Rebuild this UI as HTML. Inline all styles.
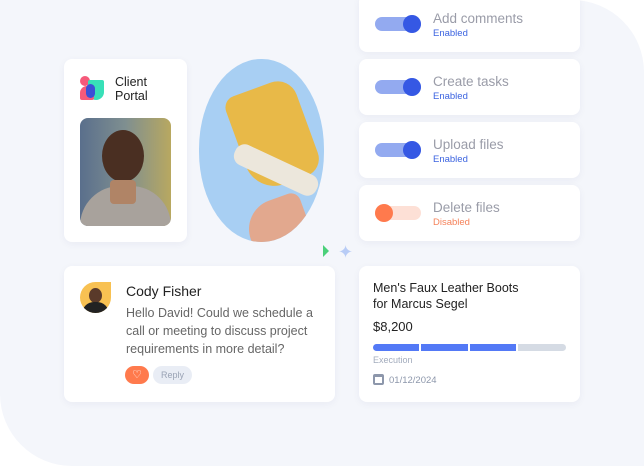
<!DOCTYPE html>
<html><head><style>
*{margin:0;padding:0;box-sizing:border-box}
body{width:644px;height:466px;background:#fff;font-family:"Liberation Sans",sans-serif;position:relative;overflow:hidden}
.bg{position:absolute;left:0;top:0;width:644px;height:466px;background:#f4f6fb;border-radius:0 72px 0 72px}
.card{position:absolute;background:#fff;border-radius:8px;box-shadow:0 2px 8px rgba(30,40,90,.05)}
.tg{position:absolute;left:16px;width:46px;height:14px;border-radius:7px}
.knob{position:absolute;top:-2px;width:18px;height:18px;border-radius:50%}
.tt{position:absolute;left:74px;font-size:13.5px;color:#9a9ca8}
.ts{position:absolute;left:74px;font-size:9.5px}
</style></head><body>
<div class="bg"></div>

<div class="card" style="left:64px;top:59px;width:123px;height:183px">
  <div style="position:absolute;left:16px;top:17px;width:24px;height:24px">
    <div style="position:absolute;left:0;top:0;width:10px;height:10px;border-radius:50%;background:#f55a7a"></div>
    <div style="position:absolute;left:8px;top:4px;width:16px;height:20px;border-radius:2px 2px 8px 8px;background:#38e0b8"></div>
    <div style="position:absolute;left:0;top:10px;width:14px;height:14px;border-radius:7px 7px 2px 2px;background:#f55a7a"></div>
    <div style="position:absolute;left:6px;top:8px;width:9px;height:14px;border-radius:5px;background:#3b50d6"></div>
  </div>
  <div style="position:absolute;left:51px;top:16px;font-size:12.5px;line-height:14px;color:#222">Client<br>Portal</div>
  <div style="position:absolute;left:16px;top:59px;width:91px;height:108px;border-radius:8px;background:linear-gradient(90deg,#5a6f8c 0%,#7f8f90 50%,#b8a860 100%);overflow:hidden">
    <div style="position:absolute;left:22px;top:12px;width:42px;height:52px;border-radius:50%;background:#4a2f22"></div>
    <div style="position:absolute;left:0;top:68px;width:91px;height:40px;border-radius:40px 40px 0 0;background:#a8a29c"></div>
    <div style="position:absolute;left:30px;top:62px;width:26px;height:24px;background:#b08466;border-radius:4px"></div>
  </div>
</div>

<div style="position:absolute;left:199px;top:59px;width:125px;height:183px;border-radius:62px/90px;background:#a8cff3;overflow:hidden">
  <div style="position:absolute;left:38px;top:26px;width:72px;height:100px;background:#e8b948;border-radius:12px 20px 18px 30px;transform:rotate(-20deg)"></div>
  <div style="position:absolute;left:32px;top:100px;width:90px;height:22px;background:#ece7dc;border-radius:10px;transform:rotate(25deg)"></div>
  <div style="position:absolute;left:50px;top:140px;width:60px;height:60px;background:#e2a88e;border-radius:30px 10px 0 0;transform:rotate(-20deg)"></div>
</div>
<div style="position:absolute;left:323px;top:245px;width:0;height:0;border-left:6px solid #4bd07a;border-top:6px solid transparent;border-bottom:6px solid transparent"></div>
<div style="position:absolute;left:338px;top:244px;color:#b8ccf6;font-size:18px;line-height:16px">✦</div>

<div class="card" style="left:359px;top:-6px;width:221px;height:58px">
  <div class="tg" style="top:23px;background:#93aaf0"><div class="knob" style="left:28px;background:#3558e4"></div></div>
  <div class="tt" style="top:17px">Add comments</div><div class="ts" style="top:34px;color:#3b63e0">Enabled</div>
</div>
<div class="card" style="left:359px;top:59px;width:221px;height:56px">
  <div class="tg" style="top:21px;background:#93aaf0"><div class="knob" style="left:28px;background:#3558e4"></div></div>
  <div class="tt" style="top:15px">Create tasks</div><div class="ts" style="top:32px;color:#3b63e0">Enabled</div>
</div>
<div class="card" style="left:359px;top:122px;width:221px;height:56px">
  <div class="tg" style="top:21px;background:#93aaf0"><div class="knob" style="left:28px;background:#3558e4"></div></div>
  <div class="tt" style="top:15px">Upload files</div><div class="ts" style="top:32px;color:#3b63e0">Enabled</div>
</div>
<div class="card" style="left:359px;top:185px;width:221px;height:56px">
  <div class="tg" style="top:21px;background:#fde0d6"><div class="knob" style="left:0;background:#ff7a4d"></div></div>
  <div class="tt" style="top:15px">Delete files</div><div class="ts" style="top:32px;color:#f5825a">Disabled</div>
</div>

<div class="card" style="left:64px;top:266px;width:271px;height:136px">
  <div style="position:absolute;left:16px;top:16px;width:31px;height:31px;border-radius:50% 0 50% 50%;background:#f8c152;overflow:hidden">
    <div style="position:absolute;left:9px;top:6px;width:13px;height:15px;border-radius:50%;background:#5a3a2a"></div>
    <div style="position:absolute;left:2px;top:20px;width:27px;height:14px;border-radius:12px 12px 0 0;background:#222"></div>
  </div>
  <div style="position:absolute;left:62px;top:17px;font-size:14px;color:#222">Cody Fisher</div>
  <div style="position:absolute;left:62px;top:38px;font-size:12.5px;line-height:18px;color:#666;width:200px">Hello David! Could we schedule a call or meeting to discuss project requirements in more detail?</div>
  <div style="position:absolute;left:61px;top:100px;width:24px;height:18px;border-radius:9px;background:#ff7a4d;color:#fff;font-size:11px;text-align:center;line-height:18px">♡</div>
  <div style="position:absolute;left:89px;top:100px;width:39px;height:18px;border-radius:9px;background:#e9edf5;color:#9aa3b5;font-size:9px;text-align:center;line-height:18px">Reply</div>
</div>

<div class="card" style="left:359px;top:266px;width:221px;height:136px">
  <div style="position:absolute;left:14px;top:14px;font-size:12.5px;line-height:16px;color:#222">Men's Faux Leather Boots<br>for Marcus Segel</div>
  <div style="position:absolute;left:14px;top:53px;font-size:13px;color:#222">$8,200</div>
  <div style="position:absolute;left:14px;top:78px;width:46px;height:7px;background:#5379f6;border-radius:4px 0 0 4px"></div>
  <div style="position:absolute;left:62px;top:78px;width:47px;height:7px;background:#5379f6"></div>
  <div style="position:absolute;left:111px;top:78px;width:46px;height:7px;background:#5379f6"></div>
  <div style="position:absolute;left:159px;top:78px;width:48px;height:7px;background:#d5dbe4;border-radius:0 4px 4px 0"></div>
  <div style="position:absolute;left:14px;top:89px;font-size:9px;color:#a3acbd">Execution</div>
  <div style="position:absolute;left:14px;top:108px;width:11px;height:11px;border:2px solid #8d97ab;border-top-width:3px;border-radius:2px"></div>
  <div style="position:absolute;left:30px;top:109px;font-size:9.5px;color:#8d97ab">01/12/2024</div>
</div>
</body></html>
